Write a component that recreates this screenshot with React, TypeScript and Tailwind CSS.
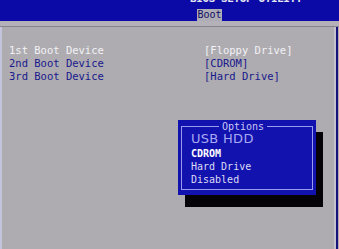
import React from 'react'

const mono = { fontFamily: '"DejaVu Sans Mono", "Liberation Mono", monospace' }

const rows = [
    { label: '1st Boot Device', value: '[Floppy Drive]', active: true },
    { label: '2nd Boot Device', value: '[CDROM]', active: false },
    { label: '3rd Boot Device', value: '[Hard Drive]', active: false },
]

function OptionsPopup() {
    return (
        <div className="absolute left-[178px] top-[120px] w-[138px] h-[75px] bg-[#1212ae] shadow-[7px_12px_0_0_#050308]">
            <div className="absolute left-[3px] top-[6px] right-[3px] bottom-[5px] border border-[#9a9af0]" />
            <div
                className="absolute left-0 right-[8px] top-[1px] flex justify-center text-[10px] leading-[12px] text-[#c8c8f4]"
                style={mono}
            >
                <span className="bg-[#1212ae] px-[3px]">Options</span>
            </div>
            <div className="absolute left-[13px] top-[12px] flex flex-col">
                <span className="text-[13px] leading-[14px] text-[#a9a9f4] tracking-[0.3px]" style={{ fontFamily: '"DejaVu Sans", sans-serif' }}>
                    USB HDD
                </span>
                <span className="text-[10px] leading-[13px] mt-[1px] font-bold text-white" style={mono}>CDROM</span>
                <span className="text-[10px] leading-[13px] text-[#dcdcf4]" style={mono}>Hard Drive</span>
                <span className="text-[10px] leading-[13px] text-[#dcdcf4]" style={mono}>Disabled</span>
            </div>
        </div>
    )
}

export default function App() {
    return (
        <div className="relative w-[339px] h-[249px] overflow-hidden bg-[#aeacb0] flex flex-col" style={mono}>
            {/* title bar */}
            <div className="h-[21px] bg-[#0b0aa6] flex flex-col overflow-hidden">
                <div className="mt-[-7px] ml-[190px] text-[11px] leading-[12px] font-bold text-[#e4e4f0] tracking-[-0.4px]">
                    BIOS SETUP UTILITY
                </div>
                <div className="mt-[4px] ml-[197px] w-[25px] h-[12px] bg-[#aeacb4] text-[10px] leading-[12px] text-[#0e0e66] text-center">
                    Boot
                </div>
            </div>
            <div className="h-[5px] bg-[#b4b2b8]" />
            <div className="h-[1px] bg-[#86848c]" />

            {/* main panel */}
            <div className="flex-1 flex border-l-[2px] border-l-[#c4c4dc]">
                <div className="flex-1 flex flex-col pt-[17px] pl-[7px]">
                    {rows.map((r) => (
                        <div key={r.label} className="flex h-[13px] items-center text-[10.5px] leading-[13px]">
                            <span className={`w-[195px] ${r.active ? 'text-[#f2f2f6]' : 'text-[#18188c]'}`}>{r.label}</span>
                            <span className={r.active ? 'text-[#f2f2f6]' : 'text-[#18188c]'}>{r.value}</span>
                        </div>
                    ))}
                </div>
                <div className="w-[2px] bg-[#c4c2cc]" />
                <div className="w-[2px] bg-[#15137a]" />
                <div className="w-[1px]" />
            </div>

            <OptionsPopup />
        </div>
    )
}
